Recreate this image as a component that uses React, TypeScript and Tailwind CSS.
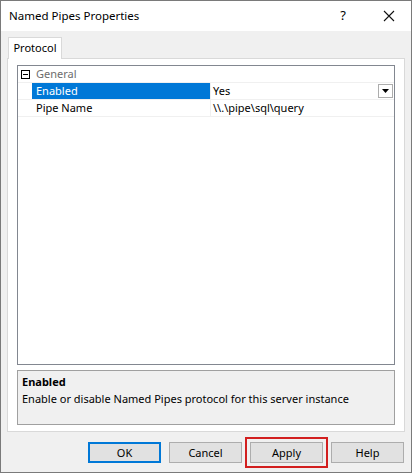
import React from 'react';

const FONT = "font-['Segoe_UI','Noto_Sans','Open_Sans',sans-serif]";

const Button: React.FC<{ label: string; primary?: boolean }> = ({ label, primary }) => (
  <button
    type="button"
    className={
      primary
        ? 'block w-[73px] h-[21px] bg-[#e1e1e1] border-2 border-[#0078d7] text-[11px] text-black leading-none'
        : 'block w-[73px] h-[21px] bg-[#e1e1e1] border border-[#adadad] text-[11px] text-black leading-none'
    }
  >
    {label}
  </button>
);

export default function App() {
  return (
    <div className={`relative w-[412px] h-[473px] overflow-hidden border border-[#7a7a7a] bg-[#f0f0f0] flex flex-col ${FONT}`}>
      {/* title bar */}
      <div className="h-[30px] bg-white flex items-center pl-[8px] shrink-0">
        <span className="text-[11.5px] text-black">Named Pipes Properties</span>
        <span className="ml-auto w-[20px] text-center text-[13px] text-black">?</span>
        <span className="ml-[26px] mr-[12px] w-[20px] flex justify-center">
          <svg width="12" height="12" viewBox="0 0 12 12">
            <path d="M1 1 L11 11 M11 1 L1 11" stroke="#111" strokeWidth="1.1" />
          </svg>
        </span>
      </div>

      {/* tab strip */}
      <div className="flex px-[6px] pt-[6px]">
        <div className="relative z-10 ml-px -mb-px h-[22px] w-[54px] bg-white border border-b-0 border-[#d9d9d9] flex items-center justify-center text-[11px] text-black">
          Protocol
        </div>
      </div>

      {/* tab page */}
      <div className="mx-[6px] h-[374px] border border-[#d9d9d9] bg-white px-[9px] pt-[6px] flex flex-col">
        {/* property grid */}
        <div className="h-[300px] border border-[#828790] bg-white flex flex-col text-[11px]">
          <div className="h-[17px] flex items-center border-b border-[#f0f0f0]">
            <div className="w-[12px] flex justify-end">
              <div className="w-[9px] h-[9px] border border-black flex items-center justify-center">
                <div className="w-[5px] h-px bg-black" />
              </div>
            </div>
            <span className="ml-[6px] text-[#6d6d6d]">General</span>
          </div>
          <div className="h-[17px] flex border-b border-[#f0f0f0]">
            <div className="w-[14px]" />
            <div className="w-[179px] bg-[#0078d7] text-white pl-[4px] flex items-center border-r border-[#f0f0f0]">Enabled</div>
            <div className="flex-1 flex items-center pl-[2px] text-black">
              <span>Yes</span>
              <div className="ml-auto mr-[1px] w-[15px] h-[14px] border border-[#adadad] bg-white flex items-center justify-center">
                <svg width="7" height="4" viewBox="0 0 7 4">
                  <path d="M0 0 H7 L3.5 4 Z" fill="#000" />
                </svg>
              </div>
            </div>
          </div>
          <div className="h-[17px] flex border-b border-[#f0f0f0]">
            <div className="w-[14px]" />
            <div className="w-[179px] text-black pl-[4px] flex items-center border-r border-[#f0f0f0]">Pipe Name</div>
            <div className="flex-1 flex items-center pl-[2px] text-black">\\.\pipe\sql\query</div>
          </div>
        </div>

        {/* description pane */}
        <div className="mt-[5px] h-[55px] border border-[#a0a0a0] bg-[#f0f0f0] px-[4px] pt-[2px] text-[11px] text-black leading-[17px]">
          <div className="font-bold">Enabled</div>
          <div>Enable or disable Named Pipes protocol for this server instance</div>
        </div>
      </div>

      {/* buttons */}
      <div className="mt-[10px] flex items-start justify-end gap-[8px] pr-[7px]">
        <Button label="OK" primary />
        <Button label="Cancel" />
        <div className="relative flex">
          <Button label="Apply" />
          <div className="pointer-events-none absolute -inset-[5px] border-2 border-[#d21f1f]" />
        </div>
        <Button label="Help" />
      </div>
    </div>
  );
}
